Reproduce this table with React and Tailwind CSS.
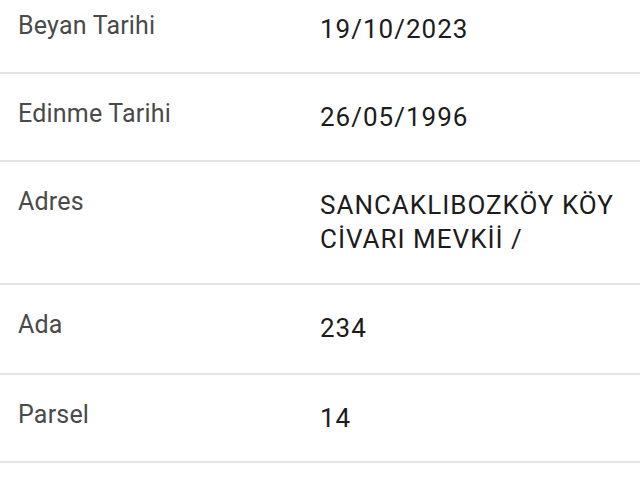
export default function App() {
  const rows = [
    { label: "Beyan Tarihi", value: ["19/10/2023"], pad: "pt-[9px] pb-[26px]" },
    { label: "Edinme Tarihi", value: ["26/05/1996"], pad: "pt-[23px] pb-[26px]" },
    { label: "Adres", value: ["SANCAKLIBOZKÖY KÖY", "CİVARI MEVKİİ /"], pad: "pt-[23px] pb-[27px]" },
    { label: "Ada", value: ["234"], pad: "pt-[23px] pb-[28px]" },
    { label: "Parsel", value: ["14"], pad: "pt-[23px] pb-[26px]" },
  ];
  return (
    <div
      className="w-[640px] h-[480px] overflow-hidden bg-white"
      style={{ fontFamily: "Roboto, 'Noto Sans', sans-serif" }}
    >
      {rows.map((r, i) => (
        <div
          key={i}
          className={`grid grid-cols-2 border-b-2 border-[#e3e3e3] ${r.pad}`}
        >
          <div className="pl-[18px] text-[25px] leading-[34px] tracking-[0.2px] text-[#4a4a4a]">
            {r.label}
          </div>
          <div className="pt-[3px] pr-[12px] text-[26px] leading-[34px] tracking-[1px] text-[#1c1c1c] whitespace-nowrap">
            {r.value.map((v, j) => (
              <div key={j}>{v}</div>
            ))}
          </div>
        </div>
      ))}
    </div>
  );
}
